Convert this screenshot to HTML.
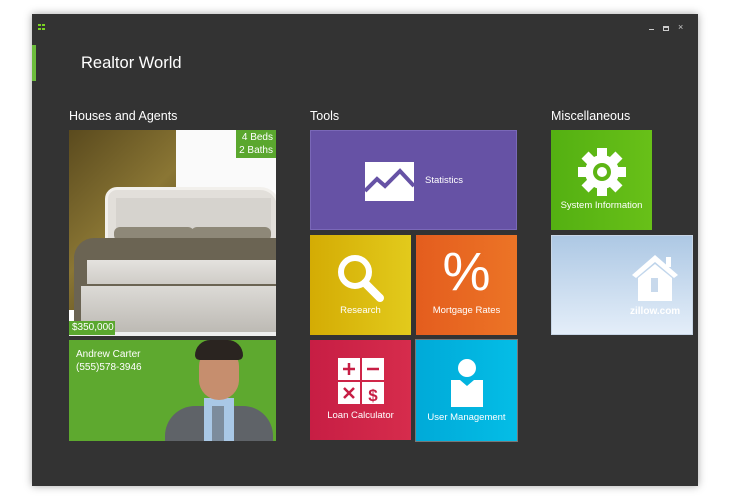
<!DOCTYPE html>
<html><head><meta charset="utf-8"><style>
*{margin:0;padding:0;box-sizing:border-box}
body{width:730px;height:500px;background:#fff;position:relative;overflow:hidden;font-family:"Segoe UI","Liberation Sans",sans-serif;color:#fff;-webkit-font-smoothing:antialiased}
.win{position:absolute;left:32px;top:14px;width:666px;height:472px;background:#333;box-shadow:0 0 8px rgba(0,0,0,.35)}
.abs{position:absolute}
.tile{position:absolute;font-size:9.5px;text-align:center}
.lbl{position:absolute;left:0;right:0;bottom:19px}
h2{position:absolute;font-weight:normal;font-size:12.5px;top:109px}
</style></head><body>
<div class="win"></div>
<div class="abs" style="left:38px;top:24px;width:3px;height:2px;background:#7bd323"></div>
<div class="abs" style="left:42px;top:24px;width:3px;height:2px;background:#7bd323"></div>
<div class="abs" style="left:38px;top:28px;width:3px;height:2px;background:#7bd323"></div>
<div class="abs" style="left:42px;top:28px;width:3px;height:2px;background:#7bd323"></div>
<div class="abs" style="left:649px;top:29px;width:5px;height:1px;background:#ccc"></div>
<div class="abs" style="left:663px;top:26px;width:6px;height:5px;border:1px solid #ccc;border-top-width:2px"></div>
<div class="abs" style="left:678px;top:22px;font-size:9px;color:#ccc">×</div>
<div class="abs" style="left:32px;top:45px;width:4px;height:36px;background:#6cbd3c"></div>
<div class="abs" style="left:81px;top:54px;font-size:16.5px">Realtor World</div>
<h2 style="left:69px">Houses and Agents</h2>
<h2 style="left:310px">Tools</h2>
<h2 style="left:551px">Miscellaneous</h2>

<div class="abs" style="left:69px;top:130px;width:207px;height:206px;overflow:hidden;background:#fff">
 <div class="abs" style="left:0;top:0;width:107px;height:180px;background:linear-gradient(135deg,#5a4a1e,#8a7634 50%,#4c3d17)"></div>
 <div class="abs" style="left:107px;top:0;width:100px;height:60px;background:#fafafa"></div>
 <div class="abs" style="left:36px;top:57px;width:175px;height:60px;background:#e2dfda;border-radius:12px 20px 0 0;border:3px solid #f2f0ec"></div>
 <div class="abs" style="left:47px;top:68px;width:155px;height:45px;background:#d6d3ce"></div>
 <div class="abs" style="left:45px;top:97px;width:80px;height:14px;background:#8e8878;border-radius:6px"></div>
 <div class="abs" style="left:122px;top:97px;width:80px;height:14px;background:#8e8878;border-radius:6px"></div>
 <div class="abs" style="left:5px;top:108px;width:210px;height:92px;background:#6b6453;border-radius:20px 0 0 0"></div>
 <div class="abs" style="left:18px;top:130px;width:190px;height:24px;background:linear-gradient(#e4e2df,#cfccc7)"></div>
 <div class="abs" style="left:12px;top:156px;width:196px;height:46px;background:linear-gradient(#dcdad6,#bdbab4)"></div>
 <div class="abs" style="left:0;top:202px;width:207px;height:4px;background:#eee"></div>
</div>
<div class="abs" style="left:236px;top:130px;width:40px;height:28px;background:#5aa72e;font-size:10px;line-height:13px;text-align:right;padding:1px 3px 0 0">4 Beds<br>2 Baths</div>
<div class="abs" style="left:69px;top:321px;width:46px;height:14px;background:#5aa72e;font-size:10px;line-height:14px;padding-left:3px">$350,000</div>

<div class="abs" style="left:69px;top:340px;width:207px;height:101px;background:#5ea92f;overflow:hidden">
 <div class="abs" style="left:7px;top:8px;font-size:10px;line-height:13px">Andrew Carter<br>(555)578-3946</div>
 <div class="abs" style="left:96px;top:66px;width:108px;height:40px;background:#5f6368;border-radius:30px 30px 0 0"></div>
 <div class="abs" style="left:135px;top:58px;width:30px;height:50px;background:#a9c8e6"></div>
 <div class="abs" style="left:143px;top:66px;width:12px;height:40px;background:#7c8c9c"></div>
 <div class="abs" style="left:130px;top:8px;width:40px;height:52px;background:#c68e6e;border-radius:18px 18px 20px 20px"></div>
 <div class="abs" style="left:126px;top:0;width:48px;height:20px;background:#2a2420;border-radius:20px 20px 6px 6px"></div>
</div>

<div class="tile" style="left:310px;top:130px;width:207px;height:100px;background:#6652a5;border:1px solid #7a68b8">
 <svg class="abs" style="left:54px;top:31px" width="49" height="39" viewBox="0 0 49 39"><rect width="49" height="39" fill="#fff"/><path d="M0 29 L12 17 L20 24 L35 9 L49 24" stroke="#6652a5" stroke-width="4" fill="none"/></svg>
 <div class="abs" style="left:114px;top:44px">Statistics</div>
</div>
<div class="tile" style="left:310px;top:235px;width:101px;height:100px;background:linear-gradient(90deg,#d4ac04,#e2ca1c)">
 <svg class="abs" style="left:26px;top:18px" width="50" height="50" viewBox="0 0 50 50"><circle cx="19" cy="19" r="14" stroke="#fff" stroke-width="6" fill="none"/><path d="M29 30 L44 45" stroke="#fff" stroke-width="8" stroke-linecap="round"/></svg>
 <div class="lbl">Research</div>
</div>
<div class="tile" style="left:416px;top:235px;width:101px;height:100px;background:linear-gradient(90deg,#e45d1e,#ec7426)">
 <div class="abs" style="left:0;right:0;top:7px;font-size:54px;line-height:60px;font-family:'Liberation Sans',sans-serif">%</div>
 <div class="lbl">Mortgage Rates</div>
</div>
<div class="tile" style="left:310px;top:340px;width:101px;height:100px;background:linear-gradient(90deg,#c71e44,#d62c4c)">
 <svg class="abs" style="left:28px;top:18px" width="46" height="46" viewBox="0 0 46 46" fill="#fff"><rect width="22" height="22"/><rect x="24" width="22" height="22"/><rect y="24" width="22" height="22"/><rect x="24" y="24" width="22" height="22"/>
 <g stroke="#c71e44" stroke-width="2.5"><path d="M5 11h12M11 5v12M29 11h12M6 30l10 10M16 30l-10 10"/></g>
 <text x="35" y="43" font-size="17" font-weight="bold" text-anchor="middle" fill="#c71e44" font-family="Liberation Sans">$</text></svg>
 <div class="lbl">Loan Calculator</div>
</div>
<div class="tile" style="left:415px;top:339px;width:103px;height:103px;background:linear-gradient(90deg,#00aad8,#04bde6);border:1px solid #777">
 <svg class="abs" style="left:35px;top:19px" width="32" height="48" viewBox="0 0 32 48" fill="#fff"><circle cx="16" cy="9" r="9"/><path d="M0 21h9l7 6 7-6h9v27H0z"/></svg>
 <div class="lbl" style="bottom:18px">User Management</div>
</div>
<div class="tile" style="left:551px;top:130px;width:101px;height:100px;background:linear-gradient(90deg,#54b012,#68c018)">
 <svg class="abs" style="left:26px;top:17px" width="50" height="50" viewBox="0 0 50 50"><g fill="#fff" transform="translate(25 25)">
 <rect x="-5" y="-24" width="10" height="48"/><rect x="-5" y="-24" width="10" height="48" transform="rotate(45)"/><rect x="-5" y="-24" width="10" height="48" transform="rotate(90)"/><rect x="-5" y="-24" width="10" height="48" transform="rotate(135)"/><circle r="17"/></g>
 <circle cx="25" cy="25" r="9" fill="#5db514"/><circle cx="25" cy="25" r="5" fill="#fff"/></svg>
 <div class="lbl">System Information</div>
</div>
<div class="tile" style="left:551px;top:235px;width:142px;height:100px;background:linear-gradient(#adc8e4,#e4eef9);border:1px solid #c8d6e6">
 <svg class="abs" style="left:79px;top:17px" width="48" height="48" viewBox="0 0 48 48" fill="#fff"><path d="M24 2 L47 22 L43 25 L24 9 L5 25 L1 22z"/><rect x="35" y="4" width="5" height="10"/><path d="M7 25 L24 11 L41 25 V48 H7z"/><rect x="20" y="25" width="7" height="14" fill="#c8d9ec"/></svg>
 <div class="abs" style="left:78px;top:70px;font-weight:bold;font-size:10px">zillow.com</div>
</div>
</body></html>
